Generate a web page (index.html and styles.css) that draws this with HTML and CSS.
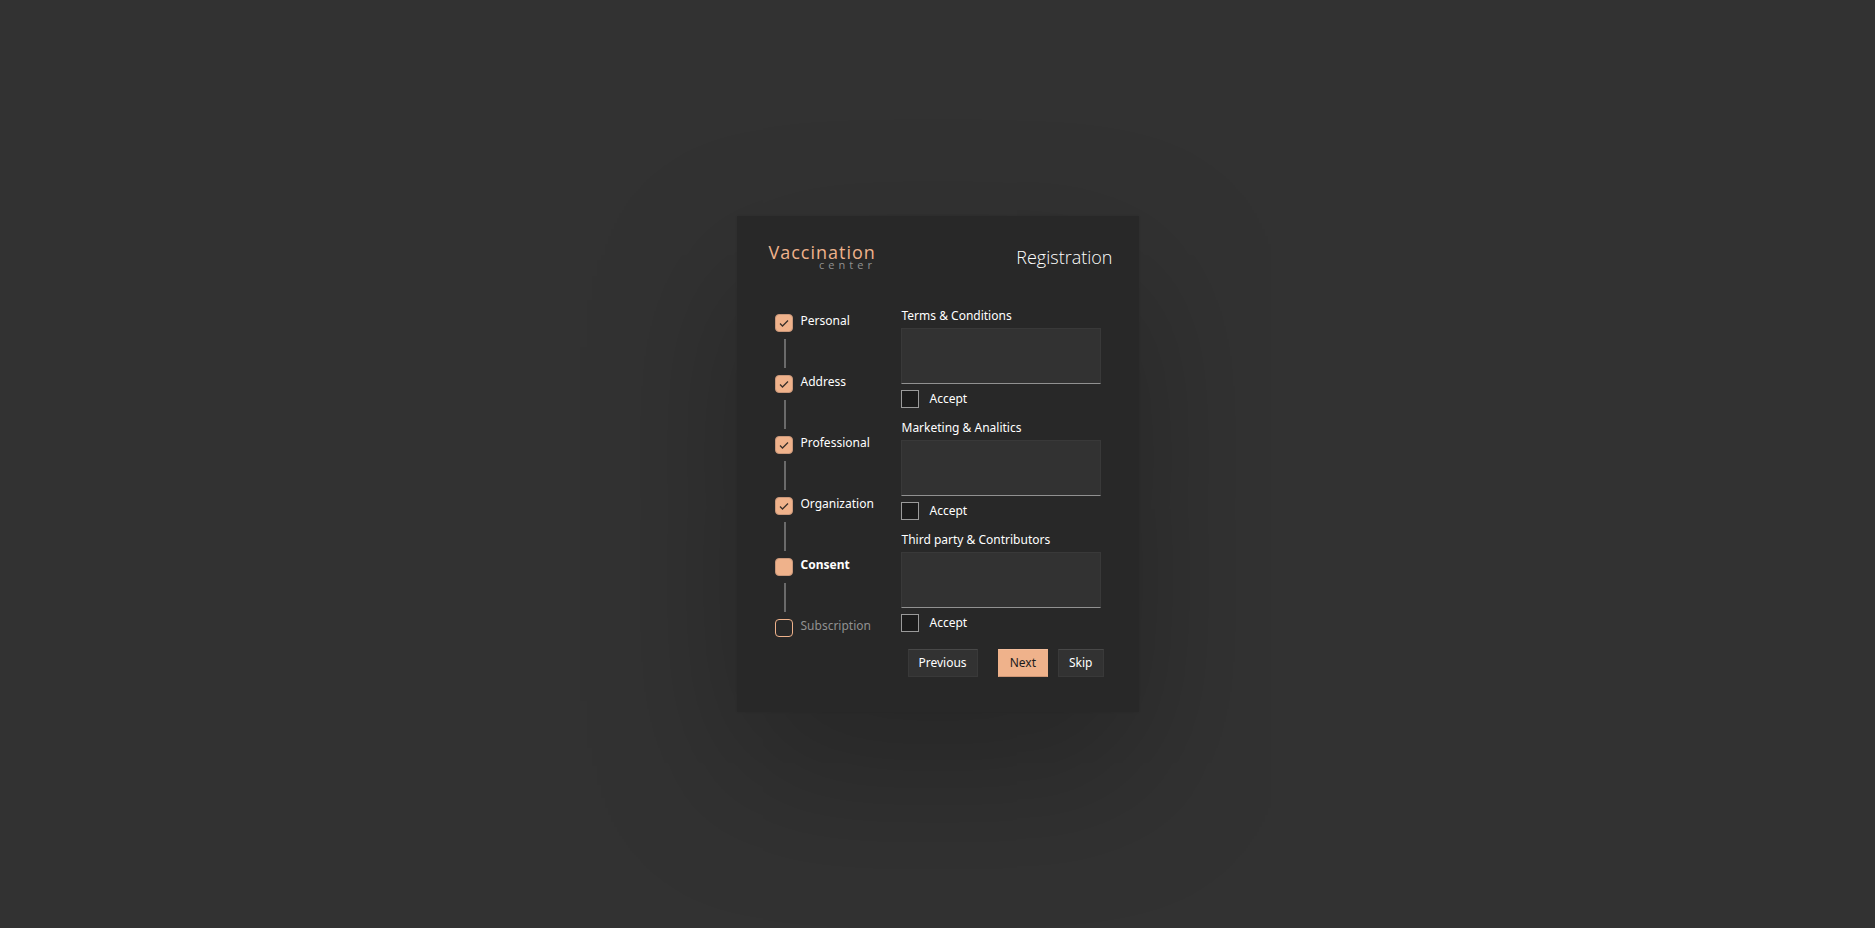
FILE: index.html
```html
<!DOCTYPE html>
<html lang="en">
<head>
<meta charset="utf-8">
<title>Vaccination center - Registration</title>
<link rel="stylesheet" href="styles.css">
</head>
<body>
<main class="card">
  <header class="header">
    <div class="brand">
      <span class="brand-name">Vaccination</span>
      <span class="brand-sub">center</span>
    </div>
    <h1 class="title">Registration</h1>
  </header>
  <div class="content">
    <ol class="steps">
      <li class="step"><span class="marker"><svg class="tick" viewBox="0 0 16 16"><path d="M4 8.5 L6.5 11 L12 5.5"/></svg></span><span>Personal</span></li>
      <li class="step"><span class="marker"><svg class="tick" viewBox="0 0 16 16"><path d="M4 8.5 L6.5 11 L12 5.5"/></svg></span><span>Address</span></li>
      <li class="step"><span class="marker"><svg class="tick" viewBox="0 0 16 16"><path d="M4 8.5 L6.5 11 L12 5.5"/></svg></span><span>Professional</span></li>
      <li class="step"><span class="marker"><svg class="tick" viewBox="0 0 16 16"><path d="M4 8.5 L6.5 11 L12 5.5"/></svg></span><span>Organization</span></li>
      <li class="step current" aria-current="step"><span class="marker"></span><span>Consent</span></li>
      <li class="step pending"><span class="marker"></span><span>Subscription</span></li>
    </ol>
    <form class="form">
      <div class="consent">
        <label class="label" for="terms">Terms &amp; Conditions</label>
        <textarea class="area" id="terms"></textarea>
        <label class="accept"><input class="check" type="checkbox">Accept</label>
      </div>
      <div class="consent">
        <label class="label" for="marketing">Marketing &amp; Analitics</label>
        <textarea class="area" id="marketing"></textarea>
        <label class="accept"><input class="check" type="checkbox">Accept</label>
      </div>
      <div class="consent">
        <label class="label" for="third">Third party &amp; Contributors</label>
        <textarea class="area" id="third"></textarea>
        <label class="accept"><input class="check" type="checkbox">Accept</label>
      </div>
      <div class="actions">
        <button class="button" type="button">Previous</button>
        <div class="forward">
          <button class="button primary" type="button">Next</button>
          <button class="button" type="button">Skip</button>
        </div>
      </div>
    </form>
  </div>
</main>
</body>
</html>
```
FILE: styles.css
```css
* { box-sizing: border-box; }

body {
  margin: 0;
  min-height: 100vh;
  display: flex;
  align-items: center;
  justify-content: center;
  background: #323232;
  color: #fff;
  font: 12px/16px "Noto Sans", "Open Sans", sans-serif;
}

.card {
  padding: 25px 26px 35px 32px;
  background: #282828;
  box-shadow: 0 60px 150px rgba(0, 0, 0, .25), 0 0 2px rgba(0, 0, 0, .1);
}

.header {
  display: flex;
  justify-content: space-between;
  align-items: flex-start;
}

.brand { display: flex; flex-direction: column; align-items: flex-end; }

.brand-name {
  color: #efb28b;
  font: 18px/22px "Open Sans", sans-serif;
  letter-spacing: 1px;
}

.brand-sub {
  margin-top: -4px;
  color: #919191;
  font: 11px/12px "Open Sans", sans-serif;
  letter-spacing: 4px;
}

.title {
  margin: 0;
  padding-top: 2px;
  font: 300 18px/28px "Open Sans", sans-serif;
}

.content {
  display: flex;
  gap: 20px;
  margin-top: 32px;
}

.steps {
  width: 112px;
  margin: 0;
  padding: 6px 0 0 6px;
  list-style: none;
}

.form { padding-right: 9px; }

.header { height: 32px; }

.steps { padding-top: 8px; }

.step {
  position: relative;
  display: flex;
  gap: 8px;
  height: 61px;
}

.step:last-child { height: 20px; }

.step:not(:last-child)::after {
  content: "";
  position: absolute;
  left: 9px;
  top: 26px;
  width: 2px;
  height: 29px;
  background: #6a6a6a;
}

.marker {
  width: 18px;
  height: 18px;
  margin-top: 1px;
  border: 1px solid #c9977a;
  border-radius: 4px;
  background: #efb28b;
}

.tick { display: block; width: 16px; height: 16px; fill: none; stroke: #3a302a; stroke-width: 1.3; }
.current { font-weight: 700; }
.pending { color: #919191; }
.pending .marker { background: transparent; border-color: #efb28b; }

.consent { display: flex; flex-direction: column; width: 203px; height: 112px; }
.label { padding: 0 0 2px 1px; line-height: 21px; }

.area {
  display: block;
  width: 200px;
  height: 56px;
  padding: 4px;
  resize: none;
  border: 1px solid #393939;
  border-bottom-color: #919191;
  border-radius: 0;
  outline: 0;
  background: #323232;
  color: #fff;
  font: inherit;
}

.accept { display: flex; align-items: center; gap: 11px; margin-top: 6px; }

.check {
  appearance: none;
  width: 18px;
  height: 18px;
  margin: 0;
  border: 1px solid #9a9a9a;
  background: #1b1b1b;
}

.actions { display: flex; justify-content: space-between; padding-left: 7px; margin-top: 8px; }
.forward { display: flex; gap: 10px; }

.button {
  height: 28px;
  padding: 0 10px;
  border: 1px solid #393939;
  border-top-color: #484848;
  background: #323232;
  color: #fff;
  font: inherit;
}

.primary {
  padding: 0 11px;
  border-color: #f3be9c #efb28b #cf9675;
  background: #efb28b;
  color: #1b1b1b;
}
```
